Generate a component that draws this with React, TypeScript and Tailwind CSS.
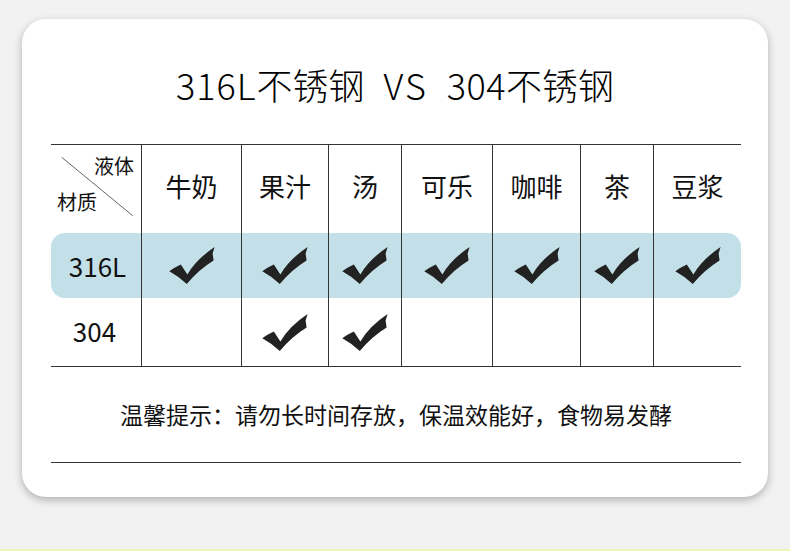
const liquids = ["牛奶", "果汁", "汤", "可乐", "咖啡", "茶", "豆浆"];

const rows = [
  { label: "316L", checks: [true, true, true, true, true, true, true], highlight: true },
  { label: "304", checks: [false, true, true, false, false, false, false], highlight: false },
];

function Check() {
  return (
    <svg width="46" height="37" viewBox="0 0 46 37" className="block">
      <path
        d="M0.3 24.2 Q6 20 11.8 17.4 L18.4 27.4 Q27 12.5 45.6 0 L43.6 6.6 L44.6 13.6 Q30 22.5 17.8 37 Q10 29.5 0.3 24.2 Z"
        fill="#222222"
      />
    </svg>
  );
}

function CornerCell() {
  return (
    <div className="relative flex flex-col border-r border-[#333] pt-[11px] text-[20px] leading-[20px] text-[#111]">
      <svg
        className="absolute left-0 top-0"
        width="90"
        height="88"
        viewBox="0 0 90 88"
      >
        <line x1="10.7" y1="12.3" x2="81.7" y2="70.7" stroke="#666" strokeWidth="1" />
      </svg>
      <span className="self-end pr-[7px]">液体</span>
      <span className="mt-[16px] pl-[6px]">材质</span>
    </div>
  );
}

export default function App() {
  const cols = "grid grid-cols-[91px_100px_87px_73px_91px_88px_73px_87px]";

  return (
    <div className="flex h-[551px] w-[790px] flex-col bg-[#f2f2f2] font-['Noto_Sans_CJK_SC',sans-serif] text-[#111]">
      <div className="ml-[22px] mt-[19px] h-[478px] w-[746px] rounded-[24px] bg-white shadow-[0_3px_8px_rgba(0,0,0,0.28)]">
        <h1 className="pt-[47px] text-center text-[36px] leading-[36px] font-light text-black">
          <span className="tracking-[1px]">316L</span>不锈钢
          <span className="mx-[19px] tracking-[2px]">VS</span>
          <span className="tracking-[0.5px]">304</span>不锈钢
        </h1>

        <div className="ml-[29px] mt-[42px] w-[690px]">
          <div className="border-t border-[#333]">
            <div className={`${cols} h-[88px]`}>
              <CornerCell />
              {liquids.map((name, i) => (
                <div
                  key={name}
                  className={`flex items-center justify-center pb-[8px] text-[26px] ${
                    i < liquids.length - 1 ? "border-r border-[#333]" : ""
                  }`}
                >
                  {name}
                </div>
              ))}
            </div>

            {rows.map((row) => (
              <div
                key={row.label}
                className={`${cols} ${
                  row.highlight ? "h-[65px] rounded-[14px] bg-[#c3e0e9]" : "h-[68px]"
                }`}
              >
                <div
                  className={`flex items-center justify-center border-r border-[#333] text-[26px] ${
                    row.highlight ? "pl-[3px]" : "pb-[3px] pr-[3px]"
                  }`}
                >
                  {row.label}
                </div>
                {row.checks.map((ok, i) => (
                  <div
                    key={i}
                    className={`flex items-center justify-center ${
                      i < row.checks.length - 1 ? "border-r border-[#333]" : ""
                    }`}
                  >
                    {ok && <Check />}
                  </div>
                ))}
              </div>
            ))}
          </div>

          <div className="flex h-[97px] items-center justify-center border-y border-[#333] text-[23px]">
            温馨提示：请勿长时间存放，保温效能好，食物易发酵
          </div>
        </div>
      </div>

      <div className="mt-auto h-[2px] w-full bg-[#eef6b6]" />
    </div>
  );
}
